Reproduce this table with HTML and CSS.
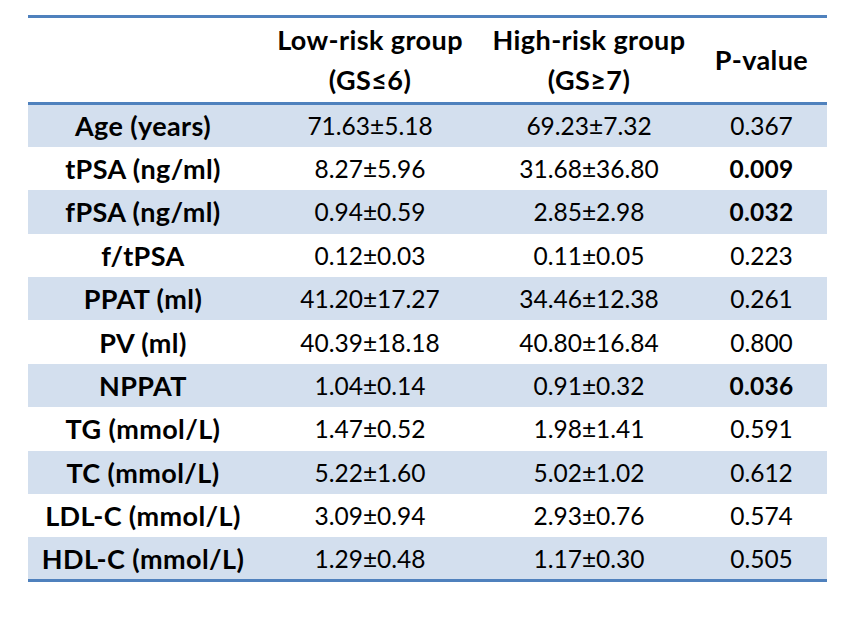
FILE: index.html
```html
<!DOCTYPE html>
<html>
<head>
<meta charset="utf-8">
<link rel="stylesheet" href="styles.css">
</head>
<body>
<table class="stats">
  <colgroup>
    <col class="c1"><col class="c2"><col class="c3"><col class="c4">
  </colgroup>
  <thead>
    <tr class="head">
      <th></th>
      <th><span class="hl">Low-risk group</span><span class="hl">(GS≤6)</span></th>
      <th><span class="hl">High-risk group</span><span class="hl">(GS≥7)</span></th>
      <th>P-value</th>
    </tr>
  </thead>
  <tbody>
    <tr class="shade"><th>Age (years)</th><td>71.63±5.18</td><td>69.23±7.32</td><td>0.367</td></tr>
    <tr><th>tPSA (ng/ml)</th><td>8.27±5.96</td><td>31.68±36.80</td><td class="sig">0.009</td></tr>
    <tr class="shade"><th>fPSA (ng/ml)</th><td>0.94±0.59</td><td>2.85±2.98</td><td class="sig">0.032</td></tr>
    <tr><th>f/tPSA</th><td>0.12±0.03</td><td>0.11±0.05</td><td>0.223</td></tr>
    <tr class="shade"><th>PPAT (ml)</th><td>41.20±17.27</td><td>34.46±12.38</td><td>0.261</td></tr>
    <tr><th>PV (ml)</th><td>40.39±18.18</td><td>40.80±16.84</td><td>0.800</td></tr>
    <tr class="shade"><th>NPPAT</th><td>1.04±0.14</td><td>0.91±0.32</td><td class="sig">0.036</td></tr>
    <tr><th>TG (mmol/L)</th><td>1.47±0.52</td><td>1.98±1.41</td><td>0.591</td></tr>
    <tr class="shade"><th>TC (mmol/L)</th><td>5.22±1.60</td><td>5.02±1.02</td><td>0.612</td></tr>
    <tr><th>LDL-C (mmol/L)</th><td>3.09±0.94</td><td>2.93±0.76</td><td>0.574</td></tr>
    <tr class="shade"><th>HDL-C (mmol/L)</th><td>1.29±0.48</td><td>1.17±0.30</td><td>0.505</td></tr>
  </tbody>
</table>
</body>
</html>
```
FILE: styles.css
```css
html, body {
  margin: 0;
  padding: 0;
  background: #ffffff;
}
body {
  padding: 15px 0 0 28px;
  font-family: Lato, "Open Sans", "Liberation Sans", sans-serif;
  color: #000000;
}
.stats {
  border-collapse: collapse;
  width: 799px;
  table-layout: fixed;
  border-top: 3px solid #4f81bd;
  border-bottom: 3px solid #4f81bd;
  font-size: 24.5px;
}
.c1 { width: 230px; }
.c2 { width: 224px; }
.c3 { width: 214px; }
.c4 { width: 131px; }
.stats th, .stats td {
  padding: 0;
  text-align: center;
  vertical-align: middle;
  white-space: nowrap;
}
.stats th {
  font-weight: 700;
  font-size: 27px;
  letter-spacing: 0.4px;
}
.stats td { font-weight: 400; }
.stats td.sig { font-weight: 700; letter-spacing: 0.3px; }
.head {
  height: 87px;
  border-bottom: 3px solid #4f81bd;
}
.head th {
  line-height: 40px;
}
.hl { display: block; }
.stats tbody tr { height: 43.4px; }
.stats tbody tr.shade { background: #d3dfee; }
```
